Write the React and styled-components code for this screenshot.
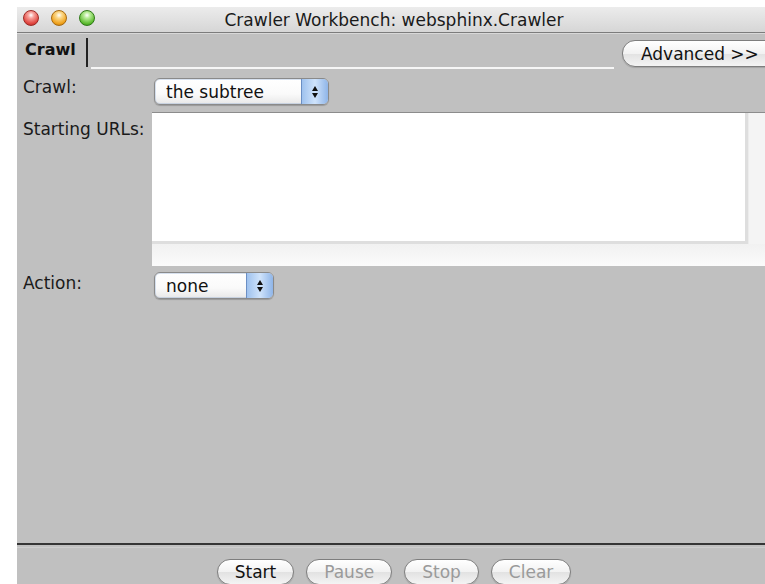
import React from "react";
import styled, { createGlobalStyle } from "styled-components";

const Global = createGlobalStyle`
  html, body { margin: 0; padding: 0; background: #ffffff; }
  body { font-family: "DejaVu Sans", "Liberation Sans", sans-serif; overflow: hidden; }
  * { box-sizing: border-box; }
`;

const Window = styled.div`
  margin: 7px 0 0 17px;
  width: 748px;
  height: 577px;
  background: #c0c0c0;
  display: flex;
  flex-direction: column;
  overflow: hidden;
`;

const TitleBar = styled.div`
  height: 26px;
  flex: none;
  position: relative;
  display: flex;
  align-items: center;
  justify-content: center;
  padding-left: 6px;
  background: linear-gradient(#ececec, #d6d6d6);
  border-bottom: 1px solid #7c7c7c;
  font-size: 17px;
  color: #1a1a1a;
`;

const Lights = styled.div`
  position: absolute;
  left: 6px;
  top: 3px;
  display: flex;
  gap: 12px;
`;

const Light = styled.span`
  width: 16px;
  height: 16px;
  border-radius: 50%;
  border: 1px solid ${(p) => p.$edge};
  background: radial-gradient(circle at 50% 30%, #ffffff 0, ${(p) => p.$hi} 25%, ${(p) => p.$base} 70%, ${(p) => p.$edge} 100%);
`;

const TabBar = styled.div`
  height: 36px;
  flex: none;
  display: flex;
  align-items: stretch;
  border-top: 1px solid #d8d8d8;
`;

const Tab = styled.div`
  flex: none;
  width: 71px;
  padding: 6px 0 0 8px;
  font-weight: bold;
  font-size: 16px;
  color: #111;
  position: relative;
  &::after {
    content: "";
    position: absolute;
    right: 0;
    top: 4px;
    bottom: 2px;
    width: 2px;
    background: #222;
  }
`;

const TabRule = styled.div`
  flex: none;
  width: 523px;
  margin-left: 3px;
  align-self: flex-end;
  height: 2px;
  background: #f6f6f6;
`;

const PillButton = styled.button`
  flex: none;
  font-family: inherit;
  font-size: 17px;
  height: ${(p) => p.$h || 26}px;
  padding: 0 ${(p) => p.$pad || 17}px;
  border-radius: 13px;
  border: 1px solid #7e7e7e;
  background: linear-gradient(#ffffff, #f2f2f2 50%, #e2e2e2 51%, #f4f4f4);
  color: ${(p) => (p.disabled ? "#9a9a9a" : "#111")};
  box-shadow: 0 1px 1px rgba(0, 0, 0, 0.15);
  white-space: nowrap;
  cursor: default;
`;

const AdvancedWrap = styled.div`
  flex: none;
  margin-left: 8px;
  padding-top: 6px;
`;

const Form = styled.div`
  display: grid;
  grid-template-columns: 129px 1fr;
  grid-template-rows: 43px 153px 40px;
  padding-left: 6px;
  font-size: 17px;
  color: #1a1a1a;
`;

const Label = styled.div`
  padding-top: ${(p) => p.$top}px;
`;

const Cell = styled.div`
  padding-top: ${(p) => p.$top || 0}px;
  padding-left: ${(p) => p.$left || 0}px;
`;

const Select = styled.div`
  width: ${(p) => p.$w}px;
  height: 27px;
  display: flex;
  border: 1px solid #8a8a8a;
  border-radius: 6px;
  overflow: hidden;
  background: linear-gradient(#ffffff, #fafafa 60%, #e8e8e8);
  box-shadow: 0 1px 1px rgba(0, 0, 0, 0.2), inset 0 0 0 1px rgba(140, 170, 210, 0.35);
`;

const SelectText = styled.div`
  flex: 1;
  padding: 3px 0 0 11px;
  font-size: 17px;
  color: #111;
`;

const Stepper = styled.div`
  width: 27px;
  display: flex;
  flex-direction: column;
  align-items: center;
  justify-content: center;
  gap: 2px;
  border-left: 1px solid #6b8fc4;
  background: linear-gradient(90deg, #9fc2ee, #cfe3fb 50%, #8fb5e8);
`;

const Arrow = styled.span`
  width: 0;
  height: 0;
  border-left: 3px solid transparent;
  border-right: 3px solid transparent;
  ${(p) => (p.$up ? "border-bottom: 5px solid #111;" : "border-top: 5px solid #111;")}
`;

const UrlPane = styled.div`
  height: 153px;
  display: grid;
  grid-template-columns: 1fr 17px;
  grid-template-rows: 131px 22px;
  border-top: 1px solid #8c8c8c;
`;

const UrlText = styled.div`
  background: #ffffff;
  border-right: 3px solid #dedede;
  border-bottom: 3px solid #dedede;
`;

const VScroll = styled.div`
  background: #f4f4f4;
  border-left: 1px solid #ececec;
`;

const HScroll = styled.div`
  grid-column: 1 / span 2;
  background: linear-gradient(#f1f1f1, #fbfbfb);
`;

const Spacer = styled.div`
  flex: 1;
`;

const Separator = styled.div`
  flex: none;
  height: 5px;
  border-top: 2px solid #353535;
  border-bottom: 1px solid #cdcdcd;
`;

const ButtonBar = styled.div`
  flex: none;
  height: 36px;
  display: flex;
  justify-content: center;
  gap: 12px;
  padding: 11px 0 0 6px;
`;

function Dropdown({ width, children }) {
  return (
    <Select $w={width}>
      <SelectText>{children}</SelectText>
      <Stepper>
        <Arrow $up />
        <Arrow />
      </Stepper>
    </Select>
  );
}

export default function App() {
  return (
    <>
      <Global />
      <Window>
        <TitleBar>
          <Lights>
            <Light $base="#e0443e" $hi="#f7a19b" $edge="#9c2a25" />
            <Light $base="#f0a21c" $hi="#fbd88a" $edge="#a86a10" />
            <Light $base="#5cbb2f" $hi="#b8ec98" $edge="#2f7a17" />
          </Lights>
          Crawler Workbench: websphinx.Crawler
        </TitleBar>
        <TabBar>
          <Tab>Crawl</Tab>
          <TabRule />
          <AdvancedWrap>
            <PillButton $h={27} $pad={18}>Advanced &gt;&gt;</PillButton>
          </AdvancedWrap>
        </TabBar>
        <Form>
          <Label $top={8}>Crawl:</Label>
          <Cell $top={9} $left={2}>
            <Dropdown width={175}>the subtree</Dropdown>
          </Cell>
          <Label $top={7}>Starting URLs:</Label>
          <Cell>
            <UrlPane>
              <UrlText />
              <VScroll />
              <HScroll />
            </UrlPane>
          </Cell>
          <Label $top={8}>Action:</Label>
          <Cell $top={7} $left={2}>
            <Dropdown width={120}>none</Dropdown>
          </Cell>
        </Form>
        <Spacer />
        <Separator />
        <ButtonBar>
          <PillButton>Start</PillButton>
          <PillButton disabled>Pause</PillButton>
          <PillButton disabled>Stop</PillButton>
          <PillButton disabled>Clear</PillButton>
        </ButtonBar>
      </Window>
    </>
  );
}
